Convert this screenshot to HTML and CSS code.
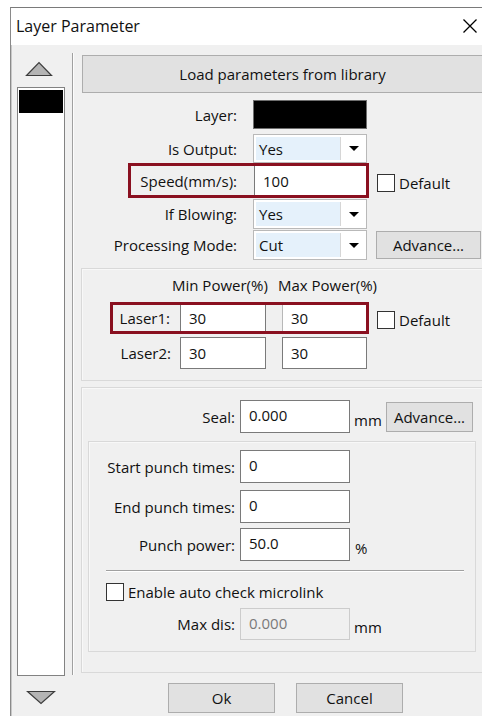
FILE: index.html
```html
<!DOCTYPE html>
<html lang="en">
<head>
<meta charset="utf-8">
<title>Layer Parameter</title>
<link rel="stylesheet" href="styles.css">
</head>
<body>
<div class="window">
  <div class="titlebar">
    <span class="title">Layer Parameter</span>
    <svg class="close" width="16" height="16" viewBox="0 0 16 16"><path d="M1.5 1.5 L14.5 14.5 M14.5 1.5 L1.5 14.5" stroke="#000" stroke-width="1.3" fill="none"/></svg>
  </div>
  <div class="client">
    <div class="layers">
      <svg class="arrow arrow-up" width="28" height="16" viewBox="0 0 28 16"><polygon points="1.5,14.5 14,1.5 26.5,14.5" fill="#b4b4b4" stroke="#3c3c3c" stroke-width="1.2"/></svg>
      <div class="layer-list"><div class="layer-item"></div></div>
      <svg class="arrow arrow-down" width="30" height="15" viewBox="0 0 30 15"><polygon points="1.5,1.5 28.5,1.5 15,13.5" fill="#b4b4b4" stroke="#3c3c3c" stroke-width="1.2"/></svg>
    </div>
    <div class="vsep"></div>
    <div class="main">
      <div class="btn btn-load">Load parameters from library</div>

      <div class="row row-layer">
        <span class="lbl">Layer:</span>
        <div class="swatch"></div>
      </div>
      <div class="row row-output">
        <span class="lbl">Is Output:</span>
        <div class="combo"><span class="val">Yes</span><span class="drop"><i class="tri"></i></span></div>
      </div>
      <div class="row row-speed">
        <div class="mark mark-speed">
          <span class="lbl">Speed(mm/s):</span>
          <span class="field field-speed">100</span>
        </div>
        <label class="check check-speed"><span class="box"></span>Default</label>
      </div>
      <div class="row row-blow">
        <span class="lbl">If Blowing:</span>
        <div class="combo"><span class="val">Yes</span><span class="drop"><i class="tri"></i></span></div>
      </div>
      <div class="row row-mode">
        <span class="lbl">Processing Mode:</span>
        <div class="combo"><span class="val">Cut</span><span class="drop"><i class="tri"></i></span></div>
        <div class="btn btn-adv">Advance...</div>
      </div>

      <div class="group group-power">
        <div class="power-head"><span class="ph-min">Min Power(%)</span><span class="ph-max">Max Power(%)</span></div>
        <div class="row row-laser1">
          <div class="mark mark-laser">
            <span class="llbl">Laser1:</span>
            <span class="field field-min">30</span>
            <span class="gap"></span>
            <span class="field field-max">30</span>
          </div>
          <label class="check check-laser"><span class="box"></span>Default</label>
        </div>
        <div class="row row-laser2">
          <span class="llbl">Laser2:</span>
          <span class="field field-min2">30</span>
          <span class="field field-max2">30</span>
        </div>
      </div>

      <div class="group group-seal">
        <div class="row row-seal">
          <span class="slbl">Seal:</span>
          <span class="field field-std">0.000</span>
          <span class="unit unit-mm">mm</span>
          <div class="btn btn-adv2">Advance...</div>
        </div>
        <div class="group group-punch">
          <div class="row row-p1">
            <span class="plbl">Start punch times:</span>
            <span class="field field-std">0</span>
          </div>
          <div class="row row-p2">
            <span class="plbl">End punch times:</span>
            <span class="field field-std">0</span>
          </div>
          <div class="row row-p3">
            <span class="plbl">Punch power:</span>
            <span class="field field-std">50.0</span>
            <span class="unit unit-pct">%</span>
          </div>
          <div class="hsep"></div>
          <label class="check check-micro"><span class="box"></span>Enable auto check microlink</label>
          <div class="row row-maxdis">
            <span class="plbl">Max dis:</span>
            <span class="field field-std field-off">0.000</span>
            <span class="unit">mm</span>
          </div>
        </div>
      </div>

      <div class="actions">
        <div class="btn btn-ok">Ok</div>
        <div class="btn btn-cancel">Cancel</div>
      </div>
    </div>
  </div>
</div>
</body>
</html>
```

FILE: styles.css
```css
* { box-sizing: border-box; }

html, body {
  margin: 0;
  padding: 0;
  background: #fff;
  overflow: hidden;
  width: 482px;
  height: 716px;
}

body {
  font-family: "Open Sans", "Noto Sans", sans-serif;
  font-size: 15px;
  color: #111;
}

/* dialog frame */
.window {
  margin: 7px 0 0 10px;
  width: 472px;
  border-top: 1px solid #7a7a7a;
  border-left: 1px solid #8a8a8a;
  box-shadow: inset 1px 0 0 #c8c8c8;
}

.titlebar {
  height: 37px;
  background: #fff;
  display: flex;
  align-items: center;
  padding-left: 5px;
}
.title {
  flex: 1;
  font-size: 16px;
  margin-top: -1px;
}
.close {
  margin-right: 4px;
  margin-top: -1px;
}

.client {
  display: flex;
  height: 671px;
  background: #f0f0f0;
  margin-left: 1px;
}

/* layer list column */
.layers {
  width: 60px;
  flex: none;
  display: flex;
  flex-direction: column;
}
.arrow { display: block; }
.arrow-up { margin: 16px 0 0 13px; }
.arrow-down { margin: 14px 0 0 14px; }
.layer-list {
  margin: 10px 0 0 5px;
  width: 48px;
  height: 589px;
  background: #fff;
  border: 1px solid #828282;
  padding: 2px 1px;
}
.layer-item {
  height: 23px;
  background: #000;
}

.vsep {
  flex: none;
  width: 1px;
  margin-top: 8px;
  height: 622px;
  background: #a0a0a0;
  box-shadow: 1px 0 0 #fcfcfc;
}

.main {
  flex: none;
  width: 460px;
  margin-left: 8px;
}

/* buttons */
.btn {
  display: flex;
  align-items: center;
  justify-content: center;
  background: #e1e1e1;
  border: 1px solid #adadad;
  white-space: nowrap;
}
.btn-load {
  margin: 10px 0 0 1px;
  width: 401px;
  height: 38px;
}

/* rows */
.row {
  display: flex;
  align-items: center;
}
.lbl {
  white-space: nowrap;
  text-align: right;
}
.row-layer { margin-top: 7px; height: 29px; }
.row-layer .lbl,
.row-output .lbl,
.row-blow .lbl,
.row-mode .lbl {
  width: 156px;
  margin-right: 16px;
}
.swatch {
  width: 114px;
  height: 29px;
  background: #000;
  border: 1px solid #6e6e6e;
}
.row-output { margin-top: 5px; height: 29px; }
.row-blow { margin-top: 1px; height: 30px; }
.row-mode { margin-top: 1px; height: 30px; }

.combo {
  display: flex;
  width: 114px;
  height: 100%;
  background: #fff;
  border: 1px solid #b9b9b9;
  padding: 2px 0 2px 2px;
}
.combo .val {
  flex: 1;
  display: flex;
  align-items: center;
  padding-left: 3px;
  background: #e5f1fb;
}
.combo .drop {
  width: 26px;
  display: flex;
  align-items: center;
  justify-content: center;
  border-left: 1px solid #d6d6d6;
}
.tri {
  width: 0;
  height: 0;
  border-left: 5px solid transparent;
  border-right: 5px solid transparent;
  border-top: 5px solid #000;
}

.btn-adv {
  margin-left: 9px;
  width: 105px;
  height: 28px;
}

/* highlighted rows */
.mark {
  display: flex;
  align-items: stretch;
  border: 3px solid #8a1020;
}
.row-speed { height: 35px; }
.mark-speed {
  margin-left: 47px;
  width: 241px;
  height: 35px;
}
.mark-speed .lbl {
  width: 106px;
  margin-right: 17px;
  display: flex;
  align-items: center;
  justify-content: flex-end;
}

.field {
  display: flex;
  align-items: center;
  background: #fff;
  padding-left: 8px;
  white-space: nowrap;
}
.field-speed {
  width: 112px;
  border-left: 1px solid #7a7a7a;
}

.check {
  display: flex;
  align-items: center;
  white-space: nowrap;
}
.box {
  width: 18px;
  height: 18px;
  border: 1px solid #333;
  background: #fff;
  margin-right: 4px;
}
.check-speed { margin: 5px 0 0 8px; }

/* power group */
.group {
  border: 1px solid #d9d9d9;
  box-shadow: inset 1px 1px 0 #f8f8f8;
}
.group-power {
  margin-top: 8px;
  width: 460px;
  height: 113px;
  padding-top: 7px;
}
.power-head {
  display: flex;
  margin-left: 90px;
  height: 18px;
  line-height: 18px;
  white-space: nowrap;
}
.ph-min { width: 106px; }
.row-laser1 { margin-top: 8px; height: 32px; }
.mark-laser {
  margin-left: 28px;
  width: 259px;
  height: 32px;
}
.llbl {
  width: 67px;
  padding-right: 10px;
  display: flex;
  align-items: center;
  justify-content: flex-end;
  white-space: nowrap;
}
.field-min {
  width: 86px;
  border-left: 1px solid #7a7a7a;
  border-right: 1px solid #7a7a7a;
}
.gap { width: 16px; }
.field-max {
  flex: 1;
  border-left: 1px solid #b8b8b8;
}
.check-laser { margin: 4px 0 0 8px; }

.row-laser2 {
  margin: 3px 0 0 31px;
  height: 32px;
}
.row-laser2 .llbl { padding-right: 9px; height: 100%; }
.field-min2, .field-max2 {
  height: 32px;
  border: 1px solid #7a7a7a;
}
.field-min2 { width: 86px; }
.field-max2 { width: 85px; margin-left: 16px; }

/* seal group */
.group-seal {
  margin-top: 6px;
  width: 460px;
  height: 286px;
  padding-top: 12px;
}
.row-seal { height: 33px; }
.slbl {
  width: 153px;
  margin-right: 5px;
  text-align: right;
  white-space: nowrap;
}
.field-std {
  width: 110px;
  height: 33px;
  border: 1px solid #7a7a7a;
  padding-bottom: 3px;
}
.unit {
  margin: 6px 0 0 4px;
}
.unit-mm { width: 27px; }
.btn-adv2 {
  margin-left: 5px;
  width: 87px;
  height: 30px;
}

.group-punch {
  margin: 8px 0 0 6px;
  width: 388px;
  height: 211px;
  padding-top: 8px;
}
.plbl {
  width: 146px;
  margin-right: 5px;
  text-align: right;
  white-space: nowrap;
}
.row-p2 { margin-top: 7px; }
.row-p3 { margin-top: 5px; }
.unit-pct { margin-left: 5px; }

.hsep {
  margin: 9px 0 0 17px;
  width: 358px;
  height: 2px;
  border-top: 1px solid #a0a0a0;
  border-bottom: 1px solid #fff;
}
.check-micro {
  margin: 10px 0 0 17px;
  height: 19px;
}
.row-maxdis { margin-top: 7px; }
.row-maxdis .field-std { height: 32px; }
.field-off {
  background: #f0f0f0;
  border-color: #cccccc;
  color: #7a7a7a;
}

/* dialog buttons */
.actions {
  display: flex;
  margin: 10px 0 0 87px;
}
.btn-ok,
.btn-cancel {
  width: 107px;
  height: 30px;
}
.btn-cancel { margin-left: 21px; }
```
